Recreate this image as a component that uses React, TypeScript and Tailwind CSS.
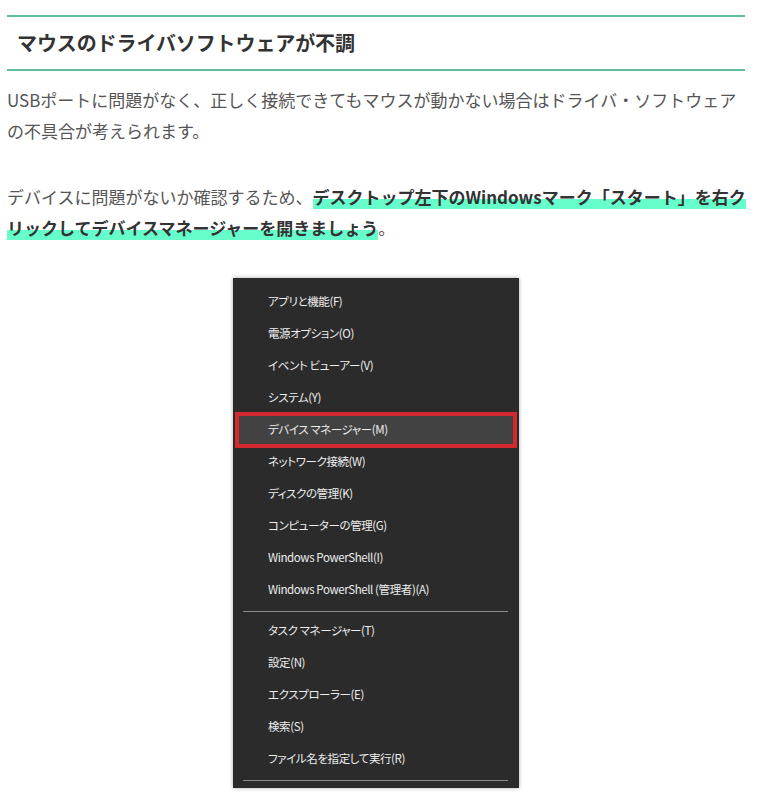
const menuTop = [
  "アプリと機能(F)",
  "電源オプション(O)",
  "イベント ビューアー(V)",
  "システム(Y)",
  "デバイス マネージャー(M)",
  "ネットワーク接続(W)",
  "ディスクの管理(K)",
  "コンピューターの管理(G)",
  "Windows PowerShell(I)",
  "Windows PowerShell (管理者)(A)",
];

const menuBottom = [
  "タスク マネージャー(T)",
  "設定(N)",
  "エクスプローラー(E)",
  "検索(S)",
  "ファイル名を指定して実行(R)",
];

const MenuItem = ({ label, active }: { label: string; active?: boolean }) => {
  if (active) {
    return (
      <div className="-my-[2px] mx-[2px] flex h-[36px] items-center border-4 border-[#d3292e] bg-[#424242] pl-[29px]">
        {label}
      </div>
    );
  }
  return <div className="flex h-[32px] items-center pl-[35px]">{label}</div>;
};

const StartMenu = () => {
  return (
    <div className="mx-auto w-[286px] bg-[#2b2b2b] pt-[8px] pb-[7px] text-[11.5px] tracking-[-0.4px] text-[#ededed] shadow-[0_0_4px_rgba(0,0,0,0.35)] [font-family:'Noto_Sans_CJK_JP',sans-serif] [font-feature-settings:'palt']">
      {menuTop.map((label, i) => (
        <MenuItem key={label} label={label} active={i === 4} />
      ))}
      <div className="mt-[5px] mb-[3px] ml-[10px] mr-[11px] h-px bg-[#8a8a8a]" />
      {menuBottom.map((label) => (
        <MenuItem key={label} label={label} />
      ))}
      <div className="mt-[5px] ml-[10px] mr-[11px] h-px bg-[#8a8a8a]" />
    </div>
  );
};

const Marker = ({ children }: { children: React.ReactNode }) => (
  <strong className="bg-[linear-gradient(transparent_62%,#66ffcc_62%)] font-bold text-[#333]">
    {children}
  </strong>
);

export default function App() {
  return (
    <div className="min-h-screen bg-white pt-[15px] [font-family:'Noto_Sans_CJK_JP',sans-serif]">
      <div className="ml-[7px] w-[738px]">
        <h2 className="flex h-[56px] items-center border-y-2 border-[#63bc9c] pl-[10px] text-[20px] font-bold tracking-[-0.1px] text-[#333]">
          マウスのドライバソフトウェアが不調
        </h2>

        <p className="mt-[13px] mr-[-4px] text-[17px] leading-[31px] text-[#555]">
          USBポートに問題がなく、正しく接続できてもマウスが動かない場合はドライバ・ソフトウェアの不具合が考えられます。
        </p>

        <p className="mt-[35px] mr-[-4px] text-[17px] leading-[31px] text-[#555]">
          デバイスに問題がないか確認するため、
          <Marker>
            デスクトップ左下のWindowsマーク「スタート」を右クリックしてデバイスマネージャーを開きましょう
          </Marker>
          。
        </p>

        <div className="mt-[35px]">
          <StartMenu />
        </div>
      </div>
    </div>
  );
}
